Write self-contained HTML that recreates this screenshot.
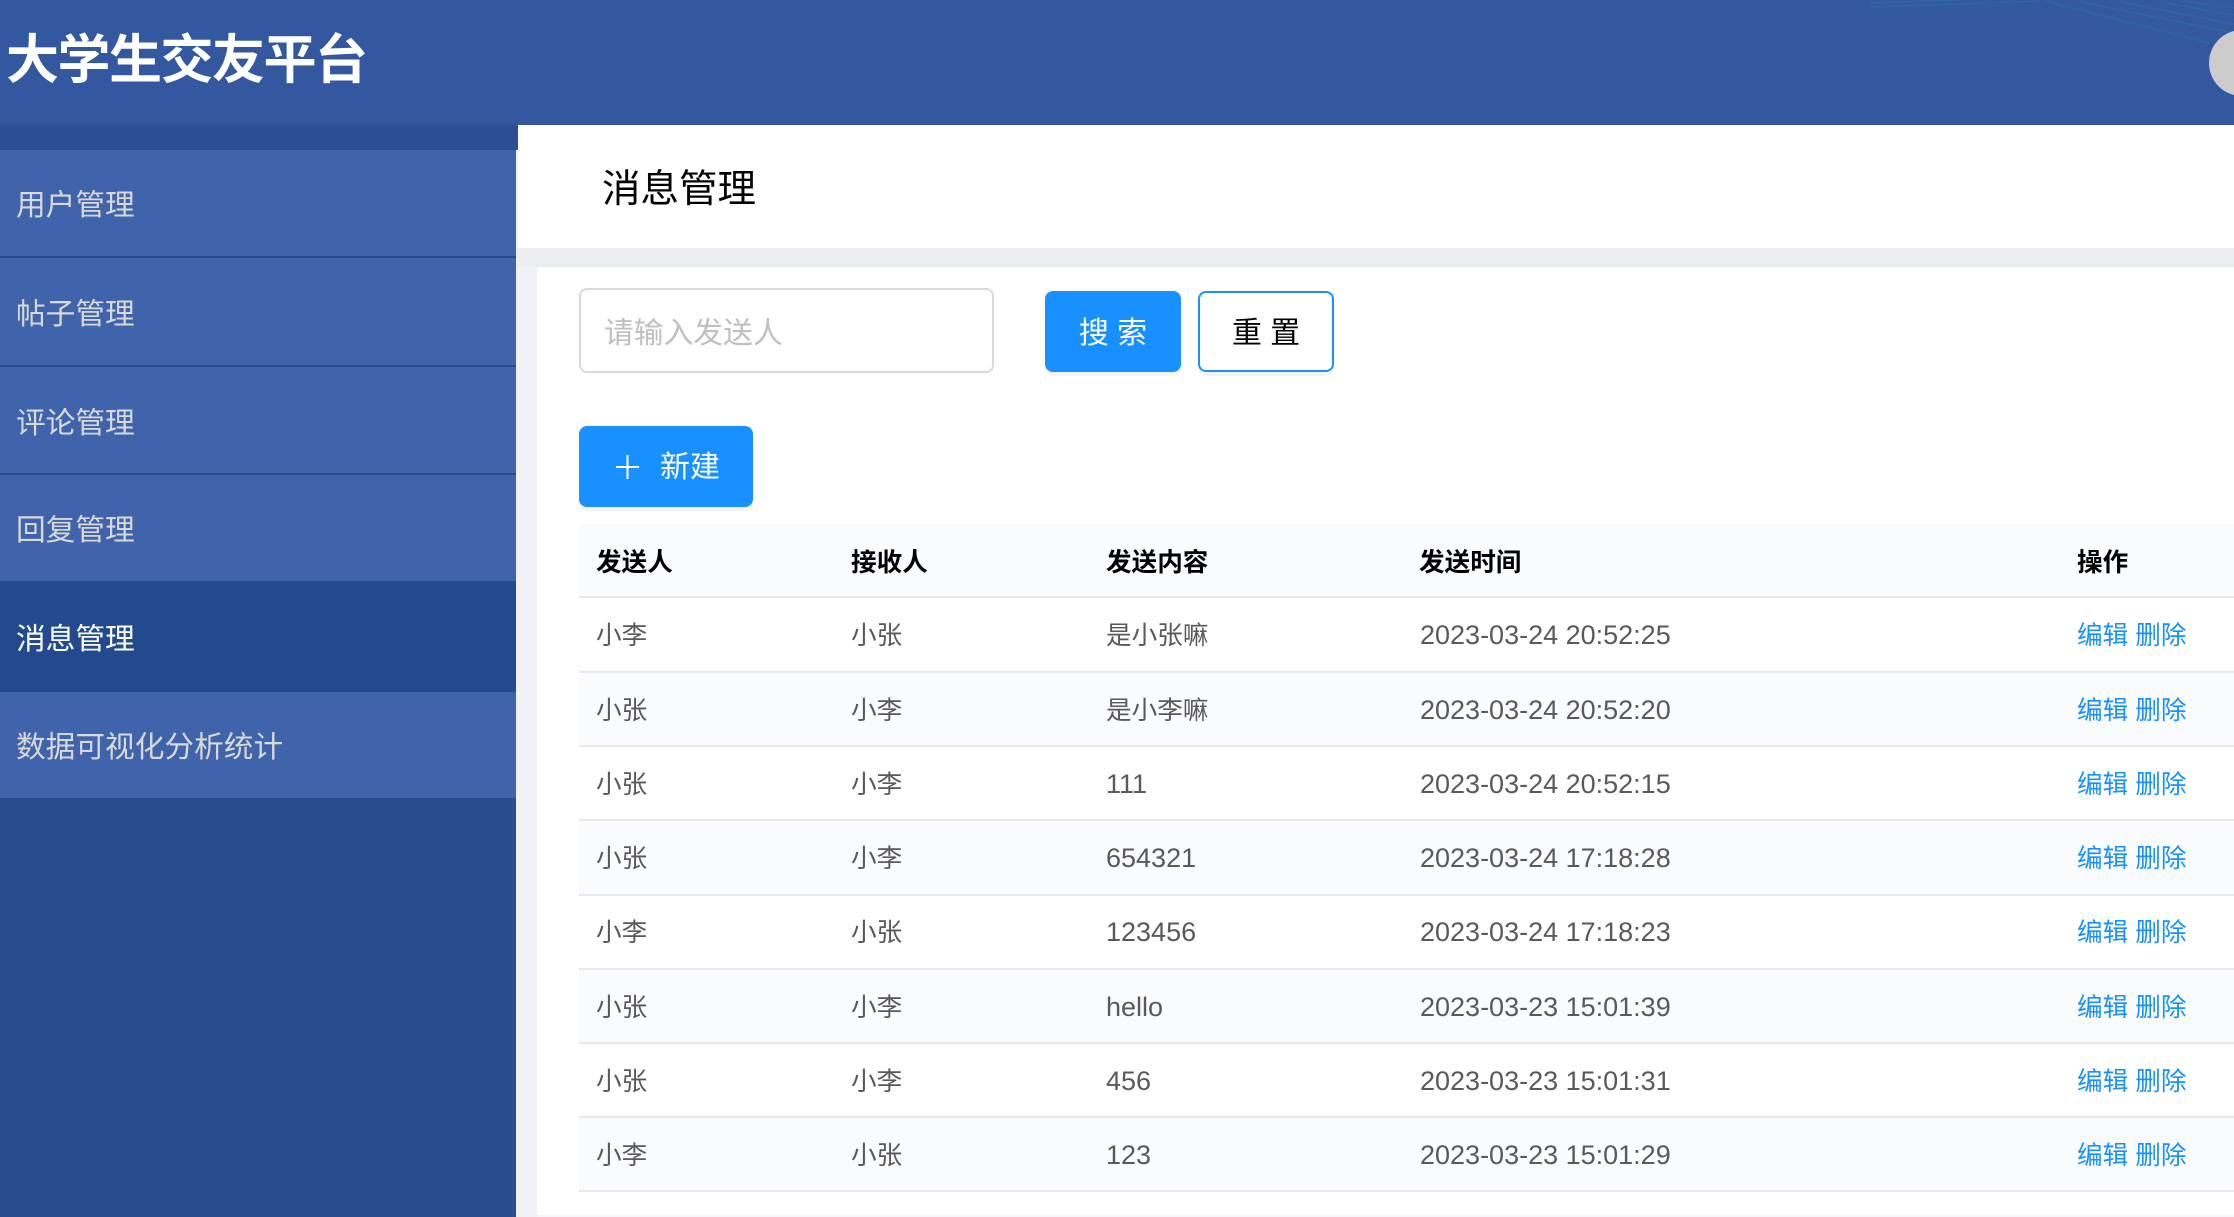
<!DOCTYPE html>
<html lang="zh-CN">
<head>
<meta charset="utf-8">
<title>消息管理</title>
<style>
html,body{margin:0;padding:0;width:2234px;height:1217px;overflow:hidden;background:#fff}
body{position:relative;font-family:"Liberation Sans","Noto Sans CJK SC",sans-serif;font-size:26px;color:#595959}
div,a,span.a{position:absolute;box-sizing:border-box;white-space:nowrap}
.hdr{left:0;top:0;width:2234px;height:125px;background:#33589f}
.title{left:6px;top:30px;font-size:53px;line-height:62px;font-weight:700;color:#fff;letter-spacing:-1.5px}
.menu{left:0;width:516px;background:#4064ab;color:#d9d9d9;font-size:29.7px;padding-left:16px;padding-top:3px}
.sep{left:0;width:516px;height:2px;background:#2a4b8a}
.btn{font-size:30px;text-align:center;border-radius:8px;box-shadow:0 4px 0 rgba(0,0,0,.045)}
.row{left:579px;width:1655px;height:2px;background:#e8e8e8}
.alt{left:579px;width:1655px;background:#fafbfe}
.c{font-size:25.6px;line-height:36px;color:#595959;margin-top:2px}
.n{font-size:27px;margin-top:1px}
.h{font-size:25.6px;line-height:36px;color:#000;font-weight:700;margin-top:2px}
.l{font-size:25.6px;line-height:36px;color:#1890ff;left:2077px;margin-top:2px}
</style>
</head>
<body>
<div class="hdr"></div>
<svg style="position:absolute;left:1840px;top:0" width="394" height="60" viewBox="0 0 394 60" fill="none" stroke="#2f66a6" stroke-width="1.5">
<path d="M30 7 L200 1"/><path d="M30 3 L120 0"/>
<path d="M205 1 L370 43"/><path d="M240 2 L394 33"/><path d="M280 2 L394 24"/><path d="M320 2 L394 15"/><path d="M340 1 L394 8"/>
</svg>
<div class="title">大学生交友平台</div>
<div style="left:2209px;top:30px;width:66px;height:66px;border-radius:50%;background:#ccc"></div>

<div style="left:0;top:125px;width:518px;height:25px;background:#2a4f94"></div>
<div style="left:0;top:150px;width:516px;height:1067px;background:#294c8f"></div>
<div style="left:516px;top:150px;width:21px;height:1067px;background:#f1f2f6"></div>

<div class="menu" style="top:150px;height:106px;line-height:106px">用户管理</div>
<div class="sep" style="top:256px"></div>
<div class="menu" style="top:258px;height:107px;line-height:107px">帖子管理</div>
<div class="sep" style="top:365px"></div>
<div class="menu" style="top:367px;height:107px;line-height:107px">评论管理</div>
<div class="sep" style="top:473px"></div>
<div class="menu" style="top:475px;height:106px;line-height:106px">回复管理</div>
<div class="menu" style="top:581px;height:111px;line-height:111px;background:#234a8f;color:#fff">消息管理</div>
<div class="menu" style="top:692px;height:106px;line-height:106px">数据可视化分析统计</div>

<div style="left:518px;top:125px;width:1716px;height:123px;background:#fff"></div>
<div style="left:602px;top:165px;font-size:38.5px;line-height:50px;color:#000">消息管理</div>
<div style="left:516px;top:248px;width:1718px;height:19px;background:#ecedf1"></div>
<div style="left:537px;top:267px;width:1697px;height:948px;background:#fff"></div>
<div style="left:537px;top:1215px;width:1697px;height:2px;background:#f7f7f9"></div>

<div style="left:579px;top:288px;width:415px;height:85px;border:2px solid #d9d9d9;border-radius:8px;background:#fff"></div>
<div style="left:604px;top:314px;font-size:29.8px;line-height:40px;color:#bfbfbf">请输入发送人</div>

<div class="btn" style="left:1045px;top:291px;width:136px;height:81px;background:#1890ff;color:#fff;line-height:85px">搜 索</div>
<div class="btn" style="left:1198px;top:291px;width:136px;height:81px;background:#fff;border:2px solid #1890ff;color:#000;line-height:81px">重 置</div>

<div class="btn" style="left:579px;top:426px;width:174px;height:81px;background:#1890ff"></div>
<svg style="position:absolute;left:616px;top:455px" width="23" height="24" viewBox="0 0 23 24" fill="none" stroke="#fff" stroke-width="2"><path d="M11.5 0V24M0 12H23"/></svg>
<div style="left:660px;top:448px;font-size:30px;line-height:40px;color:#fff">新建</div>

<div class="alt" style="top:524px;height:72px;border-radius:6px 0 0 0"></div>
<div class="row" style="top:596px"></div>
<div class="h" style="left:596px;top:543px">发送人</div>
<div class="h" style="left:851px;top:543px">接收人</div>
<div class="h" style="left:1106px;top:543px">发送内容</div>
<div class="h" style="left:1419px;top:543px">发送时间</div>
<div class="h" style="left:2077px;top:543px">操作</div>

<div class="row" style="top:671px"></div>
<div class="alt" style="top:673px;height:72px"></div>
<div class="row" style="top:745px"></div>
<div class="row" style="top:819px"></div>
<div class="alt" style="top:821px;height:73px"></div>
<div class="row" style="top:894px"></div>
<div class="row" style="top:968px"></div>
<div class="alt" style="top:970px;height:72px"></div>
<div class="row" style="top:1042px"></div>
<div class="row" style="top:1116px"></div>
<div class="alt" style="top:1118px;height:72px"></div>
<div class="row" style="top:1190px"></div>

<div class="c" style="left:596px;top:616px">小李</div><div class="c" style="left:851px;top:616px">小张</div><div class="c" style="left:1106px;top:616px">是小张嘛</div><div class="c n" style="left:1420px;top:616px">2023-03-24 20:52:25</div><div class="l" style="top:616px">编辑 删除</div>
<div class="c" style="left:596px;top:691px">小张</div><div class="c" style="left:851px;top:691px">小李</div><div class="c" style="left:1106px;top:691px">是小李嘛</div><div class="c n" style="left:1420px;top:691px">2023-03-24 20:52:20</div><div class="l" style="top:691px">编辑 删除</div>
<div class="c" style="left:596px;top:765px">小张</div><div class="c" style="left:851px;top:765px">小李</div><div class="c n" style="left:1106px;top:765px">111</div><div class="c n" style="left:1420px;top:765px">2023-03-24 20:52:15</div><div class="l" style="top:765px">编辑 删除</div>
<div class="c" style="left:596px;top:839px">小张</div><div class="c" style="left:851px;top:839px">小李</div><div class="c n" style="left:1106px;top:839px">654321</div><div class="c n" style="left:1420px;top:839px">2023-03-24 17:18:28</div><div class="l" style="top:839px">编辑 删除</div>
<div class="c" style="left:596px;top:913px">小李</div><div class="c" style="left:851px;top:913px">小张</div><div class="c n" style="left:1106px;top:913px">123456</div><div class="c n" style="left:1420px;top:913px">2023-03-24 17:18:23</div><div class="l" style="top:913px">编辑 删除</div>
<div class="c" style="left:596px;top:988px">小张</div><div class="c" style="left:851px;top:988px">小李</div><div class="c n" style="left:1106px;top:988px">hello</div><div class="c n" style="left:1420px;top:988px">2023-03-23 15:01:39</div><div class="l" style="top:988px">编辑 删除</div>
<div class="c" style="left:596px;top:1062px">小张</div><div class="c" style="left:851px;top:1062px">小李</div><div class="c n" style="left:1106px;top:1062px">456</div><div class="c n" style="left:1420px;top:1062px">2023-03-23 15:01:31</div><div class="l" style="top:1062px">编辑 删除</div>
<div class="c" style="left:596px;top:1136px">小李</div><div class="c" style="left:851px;top:1136px">小张</div><div class="c n" style="left:1106px;top:1136px">123</div><div class="c n" style="left:1420px;top:1136px">2023-03-23 15:01:29</div><div class="l" style="top:1136px">编辑 删除</div>
</body>
</html>
